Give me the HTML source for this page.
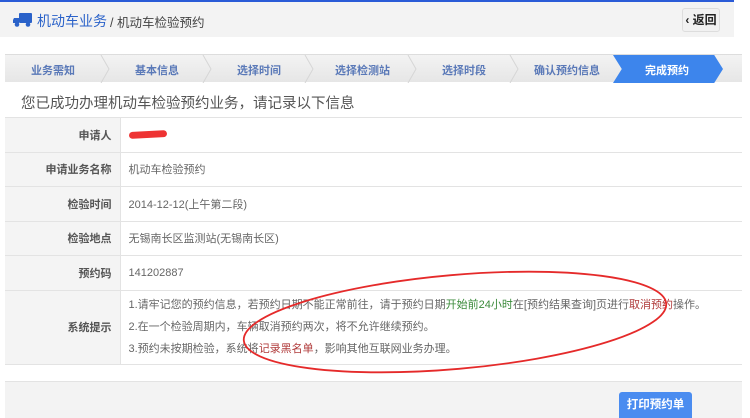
<!DOCTYPE html>
<html><head><meta charset="utf-8"><style>
*{margin:0;padding:0;box-sizing:border-box}
body{width:750px;height:418px;overflow:hidden;background:#fff;font-family:"Liberation Sans","Noto Sans CJK SC",sans-serif;position:relative;color:#555}
.hdr{position:absolute;left:0;top:0;width:734px;height:37px;background:#f3f3f3;border-top:2px solid #2a5bd7}
.hdr .t1{position:absolute;left:37px;top:9px;font-size:14px;color:#2a62c9}
.hdr .t2{position:absolute;left:110px;top:10px;font-size:12.5px;color:#444}
.back{position:absolute;left:682px;top:6px;width:38px;height:24px;border:1px solid #ddd;border-radius:3px;background:#f1f1f1;font-size:12px;color:#222;font-weight:bold;text-align:center;line-height:22px}
.steps{position:absolute;left:5px;top:54px;width:737px;height:28px;background:linear-gradient(#f3f3f3,#e6e6e6);border-top:1px solid #ddd}
.steps span{position:absolute;top:7px;font-size:11px;font-weight:bold;color:#5a79b8}
.act{position:absolute;left:608px;top:0;width:110px;height:28px;background:#3d85ec;clip-path:polygon(0 0,92% 0,100% 50%,92% 100%,0 100%,8% 50%)}
.title{position:absolute;left:21px;top:92px;font-size:14.5px;color:#555}
table{position:absolute;left:5px;top:117px;width:737px;border-collapse:collapse;font-size:11px}
td{border-top:1px solid #e3e3e3;height:34.5px;padding:0 8px;color:#666}
td.l{width:115px;background:#f4f4f4;text-align:right;font-weight:bold;color:#555;border-right:1px solid #e3e3e3}
.tips p{line-height:22px}
.foot{position:absolute;left:5px;top:381px;width:737px;height:37px;background:#f3f3f3;border-top:1px solid #e3e3e3}
.btn{position:absolute;left:619px;top:392px;width:73px;height:26px;background:#4a8cf0;border-radius:3px 3px 0 0;color:#fff;font-size:11.5px;font-weight:bold;text-align:center;line-height:26px}
</style></head><body>
<div class="hdr">
<svg style="position:absolute;left:13px;top:10px" width="20" height="16" viewBox="0 0 20 16"><rect x="6" y="1" width="13" height="10" rx="1" fill="#2a62c9"/><path d="M1 6h5v5H0V8z" fill="#2a62c9"/><circle cx="4" cy="12.5" r="2.3" fill="#2a62c9"/><circle cx="15" cy="12.5" r="2.3" fill="#2a62c9"/></svg>
<div class="t1">机动车业务</div><div class="t2">/ 机动车检验预约</div>
<div class="back">‹ 返回</div></div>
<div class="steps">
<svg style="position:absolute;left:0;top:0" width="737" height="28"><g stroke="#d6d6d6" fill="none"><path d="M96 0l8 14-8 14M198 0l8 14-8 14M300 0l8 14-8 14M403 0l8 14-8 14M505 0l8 14-8 14"/></g></svg>
<span style="left:26px">业务需知</span><span style="left:130px">基本信息</span><span style="left:232px">选择时间</span><span style="left:330px">选择检测站</span><span style="left:437px">选择时段</span><span style="left:529px">确认预约信息</span>
<div class="act"></div><span style="left:640px;color:#fff">完成预约</span>
</div>
<div class="title">您已成功办理机动车检验预约业务，请记录以下信息</div>
<table>
<tr><td class="l">申请人</td><td><span style="display:inline-block;width:38px;height:7px;background:#e33;border-radius:4px;transform:rotate(-3deg)"></span></td></tr>
<tr><td class="l">申请业务名称</td><td>机动车检验预约</td></tr>
<tr><td class="l">检验时间</td><td>2014-12-12(上午第二段)</td></tr>
<tr><td class="l">检验地点</td><td>无锡南长区监测站(无锡南长区)</td></tr>
<tr><td class="l">预约码</td><td>141202887</td></tr>
<tr><td class="l" style="height:74px;border-bottom:1px solid #e3e3e3">系统提示</td><td class="tips" style="border-bottom:1px solid #e3e3e3">
<p>1.请牢记您的预约信息，若预约日期不能正常前往，请于预约日期<span style="color:#3a8a3a">开始前24小时</span>在[预约结果查询]页进行<span style="color:#b03a3a">取消预约</span>操作。</p>
<p>2.在一个检验周期内，车辆取消预约两次，将不允许继续预约。</p>
<p>3.预约未按期检验，系统将<span style="color:#b03a3a">记录黑名单</span>，影响其他互联网业务办理。</p></td></tr>
</table>
<div class="foot"></div><div class="btn">打印预约单</div>
<svg style="position:absolute;left:0;top:0" width="750" height="418"><ellipse cx="455" cy="322" rx="212" ry="47" transform="rotate(-5 455 322)" fill="none" stroke="#e52a2a" stroke-width="1.8"/></svg>
</body></html>
